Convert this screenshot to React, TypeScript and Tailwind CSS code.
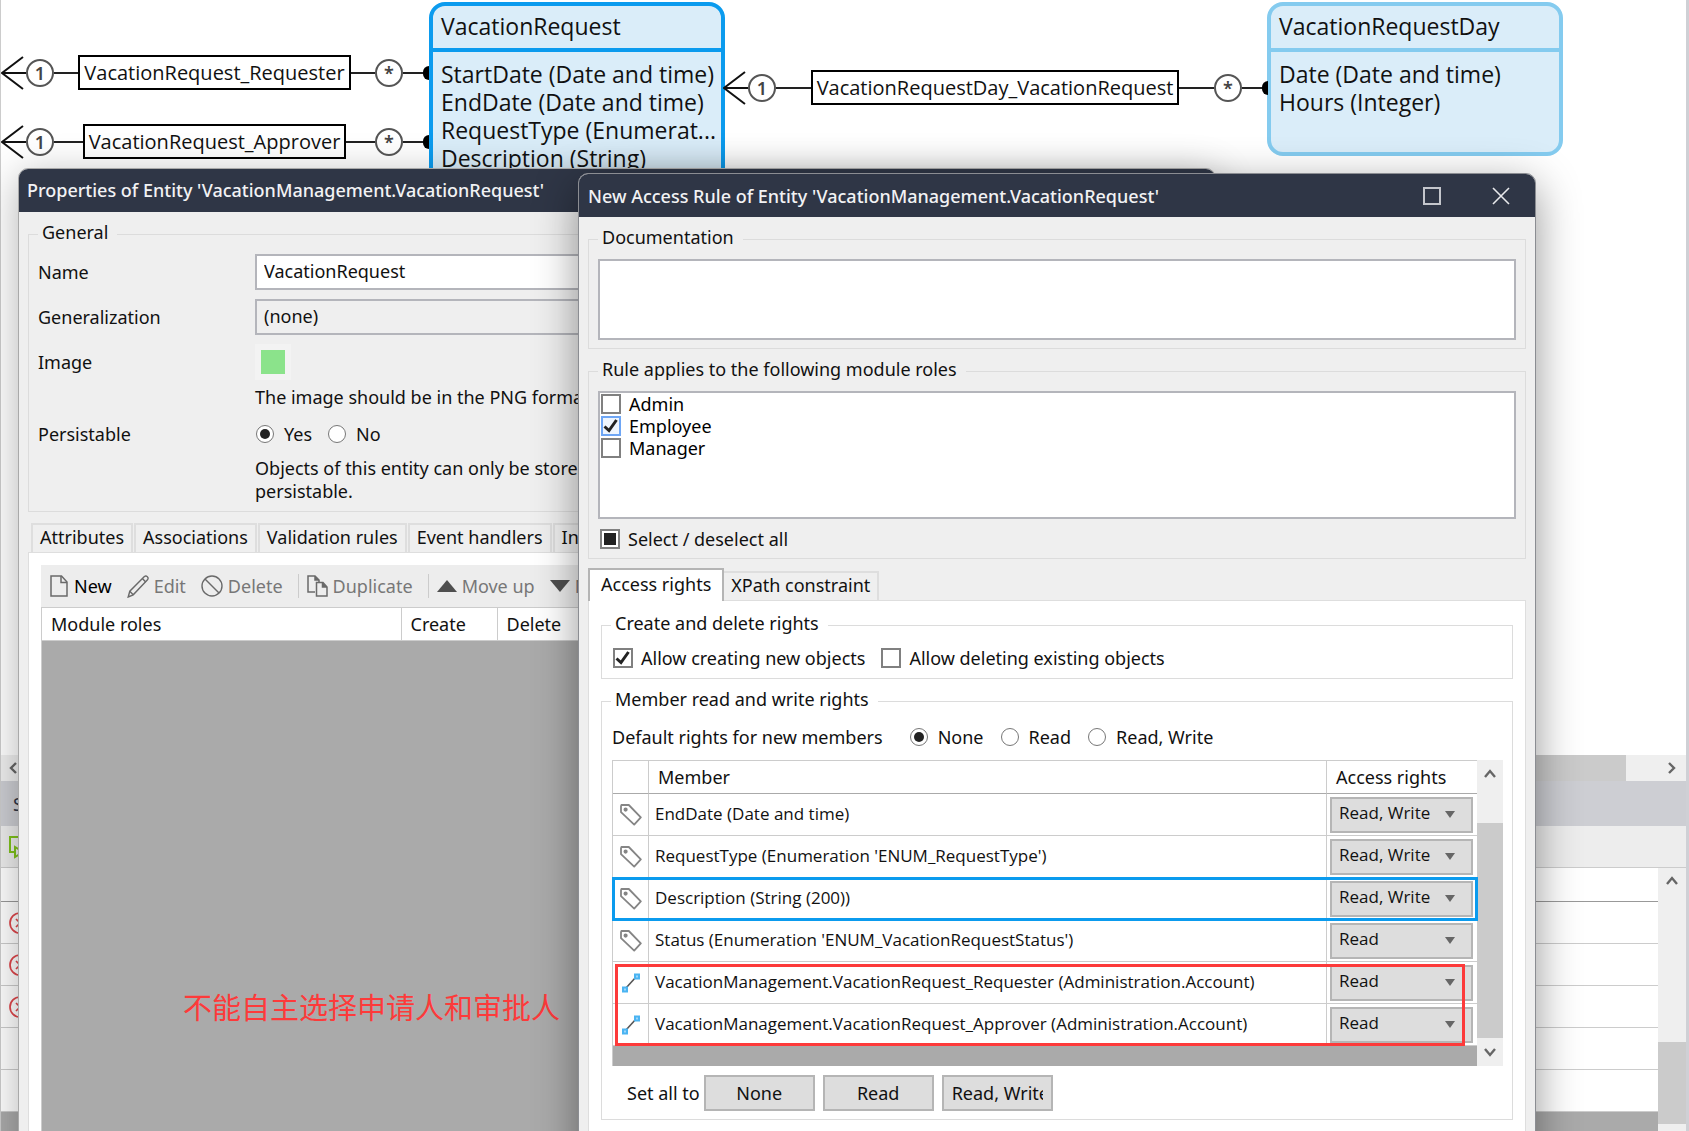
import React from "react";

type IconProps = { className?: string };

const Check = ({ className = "" }: IconProps) => (
  <svg viewBox="0 0 16 16" fill="none" stroke="#222" strokeWidth="3" className={className}>
    <path d="M1.5 8.5 6 12.5 13.5 2" />
  </svg>
);

const NewIcon = () => (
  <svg width="18" height="22" viewBox="0 0 18 22" fill="none" stroke="#6a6a6a" strokeWidth="1.5">
    <path d="M1 1h10.5l5.5 6v14H1z" />
    <path d="M11 1v6.5h6" />
  </svg>
);

const EditIcon = () => (
  <svg width="22" height="23" viewBox="0 0 22 23" fill="none" stroke="#6a6a6a" strokeWidth="1.4">
    <path d="M1.2 22l1.6-5.8L17.4 1.6a1.9 1.9 0 0 1 2.8 0l.3.3a1.9 1.9 0 0 1 0 2.8L6.2 19.8z" />
    <path d="M2.8 16.2l3.4 3.6M15.4 3.6l3.3 3.4" />
  </svg>
);

const DeleteIcon = () => (
  <svg width="22" height="22" viewBox="0 0 22 22" fill="none" stroke="#6a6a6a" strokeWidth="1.4">
    <circle cx="11" cy="11" r="10" />
    <path d="M4 4l14 14" />
  </svg>
);

const DuplicateIcon = () => (
  <svg width="21" height="22" viewBox="0 0 21 22" fill="none" stroke="#6a6a6a" strokeWidth="1.5">
    <path d="M8 17H1V1h7l4 4v3" />
    <path d="M8 1v4h4" fill="#6a6a6a" />
    <path d="M9.5 7.5h6.5l4 4.5v9H9.5z" />
    <path d="M15.5 7.5V12H20" fill="#6a6a6a" />
  </svg>
);

const TriangleUp = () => (
  <svg width="20" height="12" viewBox="0 0 20 12" fill="#4f4f4f">
    <path d="M10 0l10 12H0z" />
  </svg>
);

const TriangleDown = () => (
  <svg width="20" height="12" viewBox="0 0 20 12" fill="#4f4f4f">
    <path d="M0 0h20L10 12z" />
  </svg>
);

const TagIcon = () => (
  <svg width="22" height="22" viewBox="0 0 22 22" fill="none" stroke="#858585" strokeWidth="1.8" className="mx-auto">
    <path d="M1 2.2 1.4 1h7.4L20.8 13.4l-6.6 7.2L1 8.2z" strokeLinejoin="round" />
    <circle cx="5.6" cy="5.6" r="1.2" fill="#858585" />
  </svg>
);

const AssocIcon = () => (
  <svg width="18" height="20" viewBox="0 0 18 20" fill="none" className="mx-auto">
    <path d="M4 15 14 4" stroke="#555" strokeWidth="1.6" />
    <path d="M13 1.5h4v4h-4z" fill="#9fd6fa" stroke="#4ab4f2" strokeWidth="2" />
    <path d="M1 14.5h4v4H1z" fill="#9fd6fa" stroke="#4ab4f2" strokeWidth="2" />
  </svg>
);

const Chevron = ({ d }: { d: string }) => (
  <svg width="12" height="12" viewBox="0 0 12 12" fill="none" stroke="#666" strokeWidth="2.4">
    <path d={d} />
  </svg>
);
const UP = "M1 9l5-6 5 6";
const DOWN = "M1 3l5 6 5-6";
const LEFT = "M9 1 4 6l5 5";
const RIGHT = "M3 1l5 5-5 5";

const ErrorIcon = () => (
  <svg width="22" height="22" viewBox="0 0 22 22" fill="none" stroke="#e0474c" strokeWidth="1.7">
    <circle cx="11" cy="11" r="10" />
    <path d="M7 7l8 8M15 7l-8 8" />
  </svg>
);

function Checkbox({ label, checked, mixed, focus }: { label: string; checked?: boolean; mixed?: boolean; focus?: boolean }) {
  return (
    <label className="flex h-5 items-center gap-2 leading-5">
      <span className="grid size-5 place-items-center">
        <input
          type="checkbox"
          defaultChecked={checked}
          className={
            "col-start-1 row-start-1 size-5 appearance-none border-2 " +
            (focus ? "border-[#6ea6f5] bg-[#eef5fe]" : "border-[#808080] bg-white")
          }
        />
        {checked && <Check className="pointer-events-none col-start-1 row-start-1 size-4" />}
        {mixed && <span className="pointer-events-none col-start-1 row-start-1 size-3 bg-[#222]" />}
      </span>
      {label}
    </label>
  );
}

function Radio({ label, name, checked }: { label: string; name: string; checked?: boolean }) {
  return (
    <label className="flex items-center gap-2.5">
      <span className="grid size-[18px] place-items-center">
        <input
          type="radio"
          name={name}
          defaultChecked={checked}
          className="peer col-start-1 row-start-1 size-[18px] appearance-none rounded-full border border-[#777] bg-white"
        />
        <span className="pointer-events-none col-start-1 row-start-1 hidden size-2.5 rounded-full bg-[#222] peer-checked:block" />
      </span>
      {label}
    </label>
  );
}

function Group({ title, className = "", children }: { title: string; className?: string; children: React.ReactNode }) {
  return (
    <fieldset className={"min-w-0 border border-[#dcdcdc] px-[9px] " + className}>
      <legend className="pr-[9px] pb-1 pl-1 leading-5">{title}</legend>
      {children}
    </fieldset>
  );
}

function Entity({ name, members, className }: { name: string; members: string[]; className: string }) {
  return (
    <div className={"absolute w-[296px] rounded-2xl border-4 bg-[#daedf9] font-['Open_Sans',sans-serif] text-[23px] leading-7 " + className}>
      <h2 className="border-b-4 border-inherit px-2 pt-1.5 pb-2">{name}</h2>
      <ul className="px-2 pt-2">
        {members.map((m) => (
          <li key={m} className="whitespace-nowrap">
            {m}
          </li>
        ))}
      </ul>
    </div>
  );
}

function Multiplicity({ children }: { children: string }) {
  return (
    <span className="flex size-7 shrink-0 items-center justify-center rounded-full border-2 border-[#555] text-lg leading-none font-semibold text-[#444]">
      {children}
    </span>
  );
}

function Association({ name, className }: { name: string; className: string }) {
  return (
    <div className={"absolute flex items-center " + className}>
      <svg width="25" height="34" viewBox="0 0 25 34" fill="none" stroke="#111" strokeWidth="2" className="shrink-0">
        <path d="M22 1 1 17l21 16M1 17h24" />
      </svg>
      <Multiplicity>1</Multiplicity>
      <span className="h-0.5 flex-1 bg-[#222]" />
      <span className="border-2 border-black bg-white px-1 font-['Open_Sans',sans-serif] text-xl leading-[31px] whitespace-nowrap">
        {name}
      </span>
      <span className="h-0.5 flex-1 bg-[#222]" />
      <Multiplicity>*</Multiplicity>
      <span className="h-0.5 w-5 bg-[#222]" />
      <span className="h-3.5 w-1.5 shrink-0 rounded-l-full bg-black" />
    </div>
  );
}

const tabs = ["Attributes", "Associations", "Validation rules", "Event handlers", "Indexes"];

const rows = [
  { text: "EndDate (Date and time)", access: "Read, Write" },
  { text: "RequestType (Enumeration 'ENUM_RequestType')", access: "Read, Write" },
  { text: "Description (String (200))", access: "Read, Write", selected: true },
  { text: "Status (Enumeration 'ENUM_VacationRequestStatus')", access: "Read" },
  { text: "VacationManagement.VacationRequest_Requester (Administration.Account)", access: "Read", assoc: true },
  { text: "VacationManagement.VacationRequest_Approver (Administration.Account)", access: "Read", assoc: true },
];

function ErrorsPanel() {
  return (
    <section className="flex h-[376px] shrink-0 flex-col border-l border-[#ccc]">
      <div className="flex h-[26px] items-center bg-[#efefef] pl-1.5">
        <Chevron d={LEFT} />
        <span className="h-full flex-1 bg-[#cbcbcb]" />
        <span className="flex w-[60px] justify-end pr-2">
          <Chevron d={RIGHT} />
        </span>
      </div>
      <div className="flex h-[45px] items-center bg-[#cdced3] pl-3 text-[#2f3646]">Stories</div>
      <div className="flex h-[42px] items-center border-b border-[#ccc] bg-[#ededed] pl-2">
        <svg width="24" height="24" viewBox="0 0 24 24" fill="none" stroke="#7fc31c" strokeWidth="2">
          <path d="M6 17H1V2h20v12" />
          <path d="M6 12v10l8-5z" />
        </svg>
      </div>
      <div className="flex min-h-0 flex-1">
        <div className="flex-1 bg-[#aaa]">
          <div className="h-[34px] border-b border-[#999] bg-white" />
          {[true, true, true, false, false].map((err, i) => (
            <div key={i} className="flex h-[42px] items-center border-b border-[#ccc] bg-white pl-2">
              {err && <ErrorIcon />}
            </div>
          ))}
        </div>
        <div className="flex w-7 flex-col items-center bg-[#efefef] pt-[7px]">
          <Chevron d={UP} />
          <span className="mt-auto h-[82px] w-full bg-[#cbcbcb]" />
          <span className="h-[7px]" />
        </div>
      </div>
    </section>
  );
}

function PropertiesDialog() {
  const tool = "flex items-center gap-[5px] text-[#777]";
  return (
    <section className="absolute top-[168px] left-[18px] flex h-[1100px] w-[1198px] flex-col overflow-hidden rounded-t-[10px] border border-[#a9a9a9] bg-[#efefef] shadow-[0_8px_40px_rgba(0,0,0,0.3)]">
      <h1 className="flex h-[43px] shrink-0 items-center bg-[#2f3646] px-2 pb-0.5 font-medium text-[#f2f2f4]">
        Properties of Entity 'VacationManagement.VacationRequest'
      </h1>
      <div className="flex flex-1 flex-col px-[9px] pt-2.5">
        <Group title="General" className="pt-2 pb-2">
          <div className="grid grid-cols-[217px_1fr] items-center gap-y-[9px]">
            <label htmlFor="entity-name">Name</label>
            <input id="entity-name" defaultValue="VacationRequest" className="h-9 border-2 border-[#b4b5bb] bg-white px-[7px] pb-0.5" />
            <label htmlFor="entity-gen">Generalization</label>
            <input id="entity-gen" readOnly value="(none)" className="h-9 border-2 border-[#b4b5bb] bg-transparent px-[7px] pb-0.5" />
            <span>Image</span>
            <button aria-label="Choose image" className="flex size-9 items-center justify-center bg-[#f3f3f3]">
              <span className="size-6 bg-[#8be38b]" />
            </button>
          </div>
          <p className="mt-[5px] ml-[217px]">The image should be in the PNG format.</p>
          <div className="mt-[13px] flex items-center">
            <span className="w-[218px]">Persistable</span>
            <div className="flex gap-4">
              <Radio name="persistable" label="Yes" checked />
              <Radio name="persistable" label="No" />
            </div>
          </div>
          <p className="mt-[11px] ml-[217px] leading-[23px]">
            Objects of this entity can only be stored in the database if it is
            <br />
            persistable.
          </p>
        </Group>
        <div className="mt-[11px] ml-[3px] flex h-[29px] gap-px">
          {tabs.map((t) => (
            <button key={t} className="border-2 border-b-0 border-[#dedede] px-[7px] pb-1">
              {t}
            </button>
          ))}
        </div>
        <div className="flex flex-1 flex-col border border-[#dedede] bg-white px-3 pt-3">
          <div className="flex h-[42px] items-center bg-[#ededed] pl-[9px]">
            <button className="flex items-center gap-1.5 text-black">
              <NewIcon />
              New
            </button>
            <button className={tool + " ml-[15px]"}>
              <EditIcon />
              Edit
            </button>
            <button className={tool + " ml-[15px]"}>
              <DeleteIcon />
              Delete
            </button>
            <span className="ml-[15px] h-6 w-px bg-[#ccc]" />
            <button className={tool + " ml-2"}>
              <DuplicateIcon />
              Duplicate
            </button>
            <span className="ml-[15px] h-6 w-px bg-[#ccc]" />
            <button className={tool + " ml-2"}>
              <TriangleUp />
              Move up
            </button>
            <button className={tool + " ml-[15px]"}>
              <TriangleDown />
              Move down
            </button>
          </div>
          <div className="flex-1 border border-[#ccc] bg-[#aaa]">
            <table className="w-full table-fixed bg-white text-left">
              <thead>
                <tr className="h-8 border-b border-[#ccc]">
                  <th className="w-[359px] border-r border-[#ccc] px-[9px] font-normal">Module roles</th>
                  <th className="w-24 border-r border-[#ccc] px-[9px] font-normal">Create</th>
                  <th className="px-[9px] font-normal">Delete</th>
                </tr>
              </thead>
            </table>
          </div>
        </div>
      </div>
      <p className="absolute top-[817px] left-[164px] font-['Noto_Sans_CJK_SC',sans-serif] text-[29px] leading-10 text-[#fd3a3a]">
        不能自主选择申请人和审批人
      </p>
    </section>
  );
}

function AccessRuleDialog() {
  const setAll = "h-9 w-[111px] overflow-hidden border-2 border-[#b5b5b5] bg-[#ddd] px-2 whitespace-nowrap";
  return (
    <section className="absolute top-[173px] left-[578px] flex h-[1100px] w-[958px] flex-col overflow-hidden rounded-t-[10px] border border-[#8b8d92] bg-[#efefef] shadow-[0_12px_44px_rgba(0,0,0,0.42)]">
      <header className="flex h-[43px] shrink-0 items-center bg-[#2f3646] pl-[9px] text-[#f2f2f4]">
        <h1 className="flex-1 font-medium">New Access Rule of Entity 'VacationManagement.VacationRequest'</h1>
        <button aria-label="Maximize" className="flex w-[69px] justify-center">
          <svg width="18" height="18" viewBox="0 0 18 18" fill="none" stroke="#c4c6cc" strokeWidth="2">
            <path d="M1 1h16v16H1z" />
          </svg>
        </button>
        <button aria-label="Close" className="flex w-[69px] justify-center">
          <svg width="18" height="18" viewBox="0 0 18 18" fill="none" stroke="#e8e9ec" strokeWidth="1.6">
            <path d="M1 1l16 16M17 1 1 17" />
          </svg>
        </button>
      </header>
      <div className="flex flex-1 flex-col px-[9px] pt-2.5">
        <Group title="Documentation" className="pt-2 pb-2">
          <textarea aria-label="Documentation" className="block h-[81px] w-full resize-none border-2 border-[#b4b5bb] bg-white" />
        </Group>
        <Group title="Rule applies to the following module roles" className="mt-2.5 pt-2 pb-[9px]">
          <div className="flex h-32 flex-col gap-0.5 border-2 border-[#b4b5bb] bg-white p-px text-black">
            <Checkbox label="Admin" />
            <Checkbox label="Employee" checked focus />
            <Checkbox label="Manager" />
          </div>
          <div className="mt-2.5 flex h-5 items-center pl-0.5">
            <Checkbox label="Select / deselect all" mixed />
          </div>
        </Group>
        <div className="mt-[9px] flex h-8 items-end">
          <button className="z-10 -mb-px h-[33px] border-2 border-b-0 border-[#b5b5b5] bg-white px-[11px] pb-1">Access rights</button>
          <button className="h-[29px] border-2 border-b-0 border-l-0 border-[#dedede] px-[7px] pb-1">XPath constraint</button>
        </div>
        <div className="flex-1 border border-[#dedede] bg-white px-3 pt-3">
          <Group title="Create and delete rights" className="pt-[11px] pb-2.5">
            <div className="flex h-5 items-center gap-4 pl-0.5">
              <Checkbox label="Allow creating new objects" checked />
              <Checkbox label="Allow deleting existing objects" />
            </div>
          </Group>
          <Group title="Member read and write rights" className="mt-2.5 pt-3 pb-2">
            <div className="flex h-6 items-center gap-[17px] pl-px">
              <span className="mr-2.5">Default rights for new members</span>
              <Radio name="default-rights" label="None" checked />
              <Radio name="default-rights" label="Read" />
              <Radio name="default-rights" label="Read, Write" />
            </div>
            <div className="mt-[11px] ml-px flex h-[306px]">
              <div className="relative flex-1 border-t border-l border-[#ccc] bg-[#aaa]">
                <table className="w-full table-fixed border-separate border-spacing-0 bg-white text-left">
                  <thead>
                    <tr className="h-[33px]">
                      <th className="w-9 border-r border-b border-[#ccc] border-b-[#aaa]" />
                      <th className="border-r border-b border-[#ccc] border-b-[#aaa] px-[9px] font-normal">Member</th>
                      <th className="w-[150px] border-b border-[#aaa] px-[9px] font-normal">Access rights</th>
                    </tr>
                  </thead>
                  <tbody className="font-['Open_Sans',sans-serif] text-[17px]">
                    {rows.map((r) => (
                      <tr
                        key={r.text}
                        className={"h-[42px] " + (r.selected ? "outline-[3px] -outline-offset-2 outline-[#0b9bee]" : "")}
                      >
                        <td className="border-r border-b border-[#ccc]">{r.assoc ? <AssocIcon /> : <TagIcon />}</td>
                        <td className="border-r border-b border-[#ccc] px-1.5 pb-0.5">{r.text}</td>
                        <td className="border-b border-[#ccc] px-[3px]">
                          <div className="grid items-center">
                            <select
                              aria-label={"Access rights of " + r.text}
                              defaultValue={r.access}
                              className="col-start-1 row-start-1 h-9 w-[143px] appearance-none border-2 border-[#b5b5b5] bg-[#ddd] px-[7px] pb-1"
                            >
                              <option>None</option>
                              <option>Read</option>
                              <option>Read, Write</option>
                            </select>
                            <svg width="10" height="7" viewBox="0 0 10 7" fill="#666" className="pointer-events-none col-start-1 row-start-1 mr-[19px] justify-self-end">
                              <path d="M0 0h10L5 7z" />
                            </svg>
                          </div>
                        </td>
                      </tr>
                    ))}
                  </tbody>
                </table>
                <div className="pointer-events-none absolute top-[203px] right-3 left-0.5 h-[82px] border-[3px] border-[#fd3a3a]" />
              </div>
              <div className="flex w-[26px] flex-col items-center bg-[#efefef] py-2">
                <Chevron d={UP} />
                <span className="mt-[43px] mb-2 w-full flex-1 bg-[#cbcbcb]" />
                <Chevron d={DOWN} />
              </div>
            </div>
            <div className="mt-[9px] flex items-center gap-2 pl-4">
              <span className="-mr-1">Set all to</span>
              <button className={setAll}>None</button>
              <button className={setAll}>Read</button>
              <button className={setAll}>
                <span className="block overflow-hidden">Read, Write</span>
              </button>
            </div>
          </Group>
        </div>
      </div>
    </section>
  );
}

export default function App() {
  return (
    <main className="relative flex h-screen flex-col overflow-hidden border-r-[3px] border-[#cfd0d5] bg-white font-['Noto_Sans','Noto_Sans_CJK_SC',sans-serif] text-[18px] leading-6 text-[#111]">
      <div className="relative flex-1 border-l border-[#ccc]">
        <Entity
          name="VacationRequest"
          members={["StartDate (Date and time)", "EndDate (Date and time)", "RequestType (Enumerat...", "Description (String)"]}
          className="top-0.5 left-[428px] h-[240px] border-[#0b9bee]"
        />
        <Entity
          name="VacationRequestDay"
          members={["Date (Date and time)", "Hours (Integer)"]}
          className="top-0.5 left-[1266px] h-[154px] border-[#84cbef]"
        />
        <Association name="VacationRequest_Requester" className="top-[55px] left-0 w-[428px]" />
        <Association name="VacationRequest_Approver" className="top-[124px] left-0 w-[428px]" />
        <Association name="VacationRequestDay_VacationRequest" className="top-[70px] left-[722px] w-[545px]" />
      </div>
      <ErrorsPanel />
      <PropertiesDialog />
      <AccessRuleDialog />
    </main>
  );
}
